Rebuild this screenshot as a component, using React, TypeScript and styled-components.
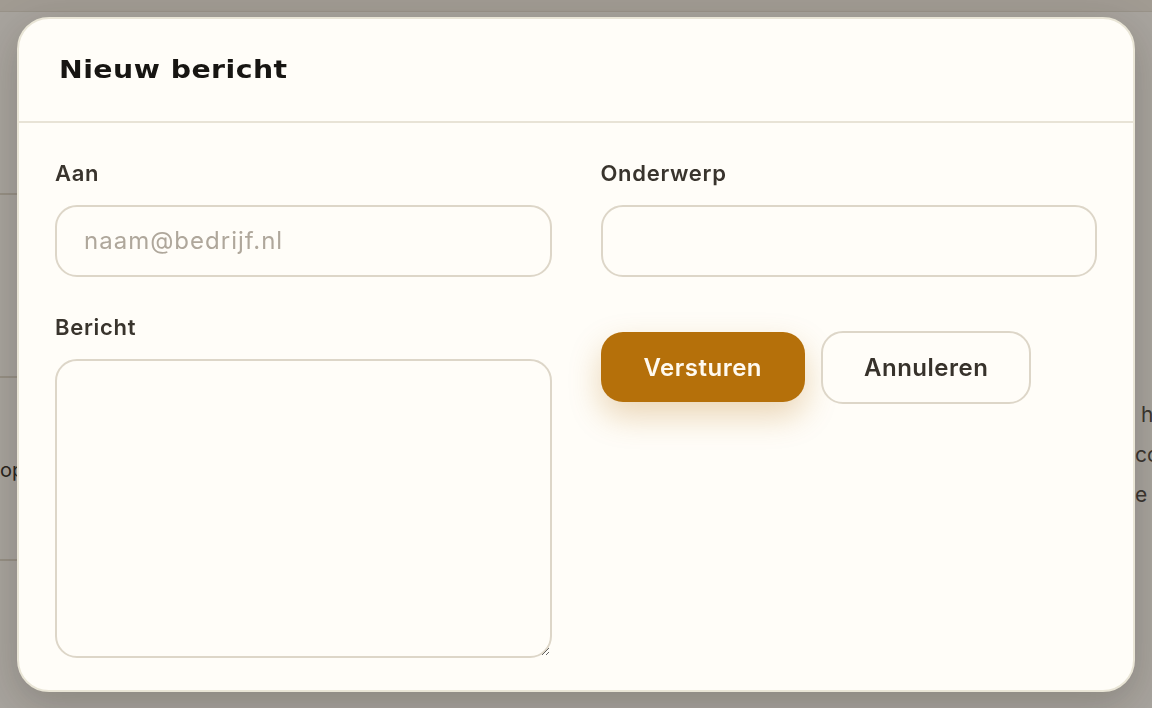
import React from 'react';
import styled, { createGlobalStyle } from 'styled-components';

const GlobalStyle = createGlobalStyle`
    html, body {
        margin: 0;
        padding: 0;
        height: 100%;
        background: #faf7f0;
        font-family: Inter, "Noto Sans", sans-serif;
        overflow: hidden;
    }
    * {
        box-sizing: border-box;
    }
`;

const Page = styled.div`
    height: 708px;
    display: flex;
    flex-direction: column;
    background: #faf7f0;
`;

const TopBar = styled.div`
    height: 12px;
    flex-shrink: 0;
    background: #efe9de;
    border-bottom: 1px solid #e2dccf;
`;

const PageBody = styled.div`
    flex: 1;
    display: flex;
    min-height: 0;
`;

const Sidebar = styled.div`
    width: 240px;
    flex-shrink: 0;
    display: flex;
    flex-direction: column;
`;

const SidebarRow = styled.div<{ $h: number }>`
    height: ${p => p.$h}px;
    border-bottom: 2px solid #ddd6c8;
    display: flex;
    align-items: center;
    padding-top: 2px;
    font-size: 20px;
    color: #2e2a25;
    white-space: nowrap;
`;

const Main = styled.div`
    flex: 1;
    display: flex;
    justify-content: flex-end;
    padding-top: 383px;
    overflow: hidden;
`;

const MainText = styled.p`
    margin: 0;
    width: 17px;
    font-size: 21px;
    line-height: 40px;
    color: #4a453e;
    white-space: pre;
    overflow: hidden;
`;

const Backdrop = styled.div`
    position: fixed;
    inset: 0;
    background: rgba(34, 30, 24, 0.38);
    display: flex;
    align-items: center;
    justify-content: center;
`;

const Modal = styled.div`
    width: 1118px;
    height: 675px;
    background: #fffdf8;
    border: 2px solid #e9e5d6;
    border-radius: 32px;
    box-shadow: 0 12px 40px rgba(30, 25, 15, 0.22);
    display: flex;
    flex-direction: column;
    overflow: hidden;
`;

const Header = styled.div`
    height: 104px;
    flex-shrink: 0;
    display: flex;
    align-items: center;
    padding: 0 40px;
    border-bottom: 2px solid #e8e3d6;
`;

// the reference uses an expanded grotesque; widen DejaVu to match
const Title = styled.h2`
    margin: 0;
    font-family: "DejaVu Sans", sans-serif;
    font-weight: 700;
    font-size: 24px;
    color: #171512;
    letter-spacing: 0.4px;
    transform: scaleX(1.18);
    transform-origin: left center;
`;

const Body = styled.div`
    flex: 1;
    display: grid;
    grid-template-columns: 1fr 1fr;
    column-gap: 49px;
    padding: 36px 36px 32px;
`;

const Column = styled.div`
    display: flex;
    flex-direction: column;
    gap: 36px;
`;

const Field = styled.label<{ $grow?: boolean }>`
    display: flex;
    flex-direction: column;
    gap: 18px;
    ${p => p.$grow && 'flex: 1;'}
`;

const LabelText = styled.span`
    font-size: 22px;
    font-weight: 600;
    line-height: 28px;
    letter-spacing: 0.7px;
    color: #39342d;
`;

const Input = styled.input`
    height: 72px;
    width: 100%;
    border: 2px solid #ddd6c8;
    border-radius: 22px;
    background: #fffdf8;
    padding: 0 27px;
    font-family: Inter, "Noto Sans", sans-serif;
    font-size: 24px;
    letter-spacing: 1px;
    color: #2e2a25;
    outline: none;

    &::placeholder {
        color: #afa79b;
    }
`;

const TextArea = styled.textarea`
    flex: 1;
    width: 100%;
    border: 2px solid #ddd6c8;
    border-radius: 22px;
    background: #fffdf8;
    padding: 20px 27px;
    font-family: Inter, "Noto Sans", sans-serif;
    font-size: 24px;
    color: #2e2a25;
    outline: none;
    resize: vertical;
`;

const Actions = styled.div`
    display: flex;
    align-items: center;
    gap: 16px;
    margin-top: 18px;
`;

const Button = styled.button<{ $primary?: boolean }>`
    height: ${p => (p.$primary ? 70 : 73)}px;
    padding: 0 ${p => (p.$primary ? 43 : 41)}px;
    border-radius: 22px;
    font-family: Inter, "Noto Sans", sans-serif;
    font-size: 24px;
    font-weight: 600;
    letter-spacing: 0.5px;
    cursor: pointer;
    border: ${p => (p.$primary ? 'none' : '2px solid #ddd6c8')};
    background: ${p => (p.$primary ? '#b5700a' : '#fffdf8')};
    color: ${p => (p.$primary ? '#fffaf0' : '#37322b')};
    box-shadow: ${p => (p.$primary ? '0 14px 32px rgba(181, 112, 10, 0.28)' : 'none')};
`;

export default function App() {
    return (
        <>
            <GlobalStyle />
            <Page>
                <TopBar />
                <PageBody>
                    <Sidebar>
                        <SidebarRow $h={183} />
                        <SidebarRow $h={183} />
                        <SidebarRow $h={183}>op maat gemaakt</SidebarRow>
                    </Sidebar>
                    <Main>
                        <MainText>{' h\nco\ne j'}</MainText>
                    </Main>
                </PageBody>
            </Page>

            <Backdrop>
                <Modal>
                    <Header>
                        <Title>Nieuw bericht</Title>
                    </Header>
                    <Body>
                        <Column>
                            <Field>
                                <LabelText>Aan</LabelText>
                                <Input type="email" placeholder="naam@bedrijf.nl" />
                            </Field>
                            <Field $grow>
                                <LabelText>Bericht</LabelText>
                                <TextArea />
                            </Field>
                        </Column>
                        <Column>
                            <Field>
                                <LabelText>Onderwerp</LabelText>
                                <Input type="text" />
                            </Field>
                            <Actions>
                                <Button $primary>Versturen</Button>
                                <Button>Annuleren</Button>
                            </Actions>
                        </Column>
                    </Body>
                </Modal>
            </Backdrop>
        </>
    );
}
